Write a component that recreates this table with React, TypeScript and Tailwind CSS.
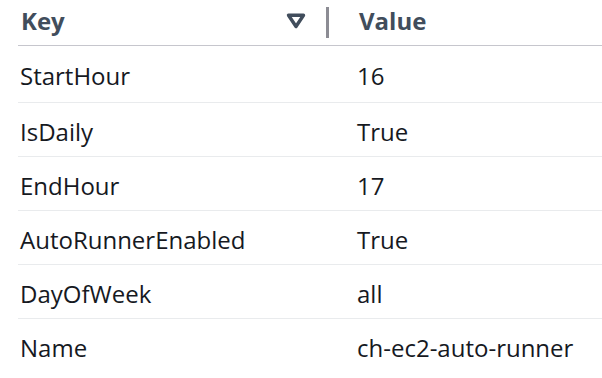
import React from "react";

const rows: [string, string][] = [
  ["StartHour", "16"],
  ["IsDaily", "True"],
  ["EndHour", "17"],
  ["AutoRunnerEnabled", "True"],
  ["DayOfWeek", "all"],
  ["Name", "ch-ec2-auto-runner"],
];

export default function App() {
  return (
    <div
      className="w-[602px] h-[378px] bg-white overflow-hidden"
      style={{ fontFamily: '"Open Sans", "Noto Sans", sans-serif' }}
    >
      <div className="ml-[18px]">
        <div className="flex h-[46px] border-b border-[#c6c6cd]">
          <div className="w-[337px] flex items-center pl-[3px] pb-[4px]">
            <span className="text-[24px] font-bold text-[#414d5c] flex-1 leading-none">Key</span>
            <svg width="20" height="16" viewBox="0 0 20 16" className="mr-[20px] mt-[1px]">
              <polygon
                points="2.5,2.2 17.5,2.2 10,13.5"
                fill="none"
                stroke="#414d5c"
                strokeWidth="3.4"
                strokeLinejoin="round"
              />
            </svg>
            <div className="w-[3px] h-[31px] bg-[#8c8c94] mr-[26px] mt-[4px]" />
          </div>
          <div className="flex items-center pl-[4px] pb-[4px]">
            <span className="text-[24px] font-bold text-[#414d5c] leading-none">Value</span>
          </div>
        </div>
        {rows.map(([k, v], i) => (
          <div
            key={k}
            className={
              "flex items-center pt-[4px] text-[24px] leading-none text-[#16191f] " +
              (i === 0 ? "h-[57px] " : "h-[54px] ") +
              (i < rows.length - 1 ? "border-b border-[#e9ebed]" : "")
            }
          >
            <div className="w-[337px] pl-[2px]">{k}</div>
            <div className="pl-[2px]">{v}</div>
          </div>
        ))}
      </div>
    </div>
  );
}
